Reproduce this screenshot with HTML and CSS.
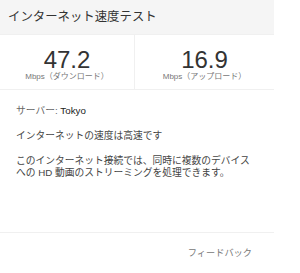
FILE: index.html
```html
<!DOCTYPE html>
<html lang="ja">
<head>
<meta charset="utf-8">
<link rel="stylesheet" href="styles.css">
</head>
<body>
<div class="card">
  <div class="header">インターネット速度テスト</div>
  <div class="speeds">
    <div class="speed">
      <div class="value">47.2</div>
      <div class="unit">Mbps（ダウンロード）</div>
    </div>
    <div class="speed">
      <div class="value">16.9</div>
      <div class="unit">Mbps（アップロード）</div>
    </div>
  </div>
  <div class="details">
    <p class="server"><span class="label">サーバー:</span> Tokyo</p>
    <p class="line">インターネットの速度は高速です</p>
    <p class="line">このインターネット接続では、同時に複数のデバイスへの HD 動画のストリーミングを処理できます。</p>
  </div>
  <div class="footer">フィードバック</div>
</div>
</body>
</html>
```
FILE: styles.css
```css
html, body {
  margin: 0;
  padding: 0;
  background: #fff;
}
body {
  font-family: "Liberation Sans", "Noto Sans CJK JP", sans-serif;
  color: #333;
}
.card {
  width: 274px;
}
.header {
  height: 34px;
  line-height: 34px;
  background: #f5f5f5;
  padding-left: 8px;
  font-size: 12.4px;
  color: #333;
  border-bottom: 1px solid #f0f0f0;
}
.speeds {
  display: grid;
  grid-template-columns: 135px 1fr;
  height: 54px;
  border-bottom: 1px solid #f0f0f0;
}
.speed {
  display: flex;
  flex-direction: column;
  align-items: center;
  padding-top: 12px;
}
.speed:first-child {
  border-right: 1px solid #f0f0f0;
}
.value {
  font-size: 24px;
  line-height: 26px;
  color: #333;
}
.unit {
  font-size: 8px;
  line-height: 10px;
  color: #777;
  margin-top: -1px;
}
.details {
  padding: 15px 16px 0 16px;
  height: 127px;
  border-bottom: 1px solid #f0f0f0;
  font-size: 9.75px;
  line-height: 12px;
}
.details p {
  margin: 0 0 13px 0;
}
.server {
  color: #222;
}
.server .label {
  color: #666;
}
.line {
  color: #444;
}
.footer {
  text-align: right;
  padding-right: 22px;
  padding-top: 14px;
  font-size: 9.2px;
  line-height: 12px;
  color: #777;
}
```
